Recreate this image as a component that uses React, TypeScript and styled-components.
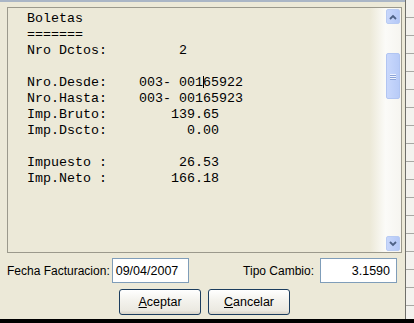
import { createGlobalStyle, styled } from "styled-components";

const GlobalStyle = createGlobalStyle`
  html, body {
    margin: 0;
    padding: 0;
    background: #ece9d8;
    overflow: hidden;
  }
`;

const Screen = styled.div`
  width: 414px;
  height: 323px;
  display: flex;
  flex-direction: column;
  background: #000;
`;

const Main = styled.div`
  display: flex;
  height: 319px;
`;

const Dialog = styled.div`
  width: 405px;
  box-sizing: border-box;
  display: flex;
  flex-direction: column;
  background: #ece9d8;
  border-top: 2px solid #aab6c6;
  padding: 5px 3px 0 7px;
`;

const BackWindow = styled.div`
  flex: 1;
  border-left: 1px solid #6f6f6a;
  background-color: #f3f2ee;
  background-image: repeating-linear-gradient(
    to bottom,
    transparent 0,
    transparent 17px,
    #a8a8a4 17px,
    #a8a8a4 18px
  );
`;

const Memo = styled.div`
  height: 246px;
  box-sizing: border-box;
  border: 1px solid #9b998c;
  display: flex;
`;

const MemoText = styled.pre`
  flex: 1;
  margin: 0;
  padding: 3px 0 0 19px;
  font-family: "Liberation Mono", "Courier New", monospace;
  font-size: 13.33px;
  line-height: 16px;
  color: #000;
`;

const Caret = styled.span`
  display: inline-block;
  width: 0;
  height: 12px;
  margin-right: -1px;
  border-left: 1px solid #000;
  vertical-align: -2px;
`;

const ScrollTrack = styled.div`
  width: 30px;
  display: flex;
  flex-direction: column;
  align-items: flex-end;
  padding: 1px 1px 1px 0;
  background: linear-gradient(to right, #ece9d8 0%, #fbfbf8 50%, #f6f5f0 100%);
`;

const ScrollButton = styled.div`
  width: 14px;
  height: 15px;
  box-sizing: border-box;
  border: 1px solid #b8cbf3;
  border-radius: 2px;
  background: linear-gradient(to right, #c8d7fb, #b4c8f6);
  display: flex;
  align-items: center;
  justify-content: center;
`;

const Spacer = styled.div<{ $h?: number }>`
  height: ${(p) => (p.$h ? `${p.$h}px` : "auto")};
  flex: ${(p) => (p.$h ? "none" : 1)};
`;

const Thumb = styled.div`
  width: 14px;
  height: 46px;
  box-sizing: border-box;
  border: 1px solid #b1c5f2;
  border-radius: 2px;
  background: linear-gradient(to right, #c9d8fc, #b8cbf7);
  display: flex;
  flex-direction: column;
  align-items: center;
  justify-content: center;
  gap: 1px;
`;

const Grip = styled.div`
  width: 6px;
  height: 1px;
  background: #eef3fe;
  box-shadow: 0 1px 0 #8ca4d8;
`;

const FieldRow = styled.div`
  display: flex;
  align-items: center;
  margin-top: 5px;
  margin-right: 5px;
`;

const FieldGroup = styled.div<{ $right?: boolean }>`
  display: flex;
  align-items: center;
  gap: ${(p) => (p.$right ? "6px" : "2px")};
  margin-left: ${(p) => (p.$right ? "auto" : "0")};
`;

const Label = styled.span`
  font-family: "Liberation Sans", Arial, sans-serif;
  font-size: 12px;
  color: #000;
`;

const Input = styled.div<{ $align?: string }>`
  width: 77px;
  height: 25px;
  box-sizing: border-box;
  border: 1px solid #7f9db9;
  background: #fff;
  font-family: "Liberation Sans", Arial, sans-serif;
  font-size: 12.5px;
  color: #000;
  display: flex;
  align-items: center;
  justify-content: ${(p) => (p.$align === "right" ? "flex-end" : "flex-start")};
  padding: 0 6px 0 3px;
`;

const ButtonRow = styled.div`
  display: flex;
  justify-content: center;
  gap: 7px;
  margin-top: 6px;
`;

const Button = styled.button`
  width: 82px;
  height: 26px;
  box-sizing: border-box;
  border: 1px solid #1c3d5e;
  border-radius: 3px;
  background: linear-gradient(to bottom, #ffffff 0%, #f4f3ee 40%, #ebe9e1 85%, #d8d3c7 100%);
  font-family: "Liberation Sans", Arial, sans-serif;
  font-size: 12.5px;
  color: #000;
  padding: 0;
  u {
    text-decoration: underline;
  }
`;

const Arrow = ({ up }: { up?: boolean }) => (
  <svg width="8" height="6" viewBox="0 0 8 6">
    <path
      d={up ? "M1 5 L4 2 L7 5" : "M1 1 L4 4 L7 1"}
      fill="none"
      stroke="#4d6185"
      strokeWidth="1.8"
    />
  </svg>
);

const App = () => {
  return (
    <>
      <GlobalStyle />
      <Screen>
        <Main>
          <Dialog>
            <Memo>
              <MemoText>
                {"Boletas\n=======\nNro Dctos:         2\n\nNro.Desde:    003- 001"}
                <Caret />
                {"65922\nNro.Hasta:    003- 00165923\nImp.Bruto:        139.65\nImp.Dscto:          0.00\n\nImpuesto :         26.53\nImp.Neto :        166.18"}
              </MemoText>
              <ScrollTrack>
                <ScrollButton>
                  <Arrow up />
                </ScrollButton>
                <Spacer $h={29} />
                <Thumb>
                  <Grip />
                  <Grip />
                  <Grip />
                </Thumb>
                <Spacer />
                <ScrollButton>
                  <Arrow />
                </ScrollButton>
              </ScrollTrack>
            </Memo>
            <FieldRow>
              <FieldGroup>
                <Label>Fecha Facturacion:</Label>
                <Input>09/04/2007</Input>
              </FieldGroup>
              <FieldGroup $right>
                <Label>Tipo Cambio:</Label>
                <Input $align="right">3.1590</Input>
              </FieldGroup>
            </FieldRow>
            <ButtonRow>
              <Button>
                <u>A</u>ceptar
              </Button>
              <Button>
                <u>C</u>ancelar
              </Button>
            </ButtonRow>
          </Dialog>
          <BackWindow />
        </Main>
      </Screen>
    </>
  );
};

export default App;
